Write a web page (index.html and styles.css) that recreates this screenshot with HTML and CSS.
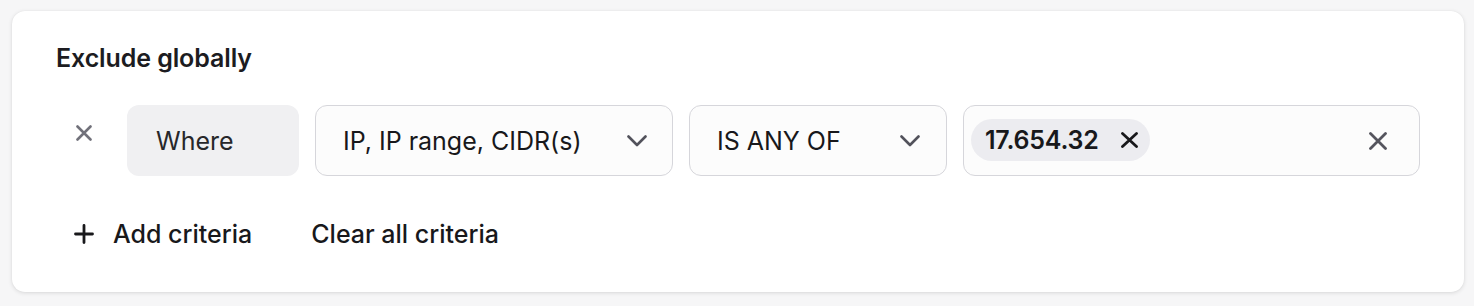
FILE: index.html
```html
<!DOCTYPE html>
<html>
<head>
<meta charset="utf-8">
<link rel="stylesheet" href="styles.css">
</head>
<body>
<div class="card">
  <h2 class="title">Exclude globally</h2>
  <div class="row">
    <button class="remove" aria-label="Remove">
      <svg width="16" height="16" viewBox="0 0 16 16"><path d="M1.5 1.5 L14.5 14.5 M14.5 1.5 L1.5 14.5" stroke="#71717a" stroke-width="2.6" stroke-linecap="round" fill="none"/></svg>
    </button>
    <div class="where">Where</div>
    <div class="select field">
      <span>IP, IP range, CIDR(s)</span>
      <svg class="chev" width="20" height="12" viewBox="0 0 20 12"><path d="M1.5 1.5 L10 10 L18.5 1.5" stroke="#52525b" stroke-width="2.6" stroke-linecap="round" stroke-linejoin="round" fill="none"/></svg>
    </div>
    <div class="select op">
      <span>IS ANY OF</span>
      <svg class="chev" width="20" height="12" viewBox="0 0 20 12"><path d="M1.5 1.5 L10 10 L18.5 1.5" stroke="#52525b" stroke-width="2.6" stroke-linecap="round" stroke-linejoin="round" fill="none"/></svg>
    </div>
    <div class="select values">
      <span class="chip">17.654.32
        <svg width="17" height="16" viewBox="0 0 17 16"><path d="M1.5 1.5 L15.5 14.5 M15.5 1.5 L1.5 14.5" stroke="#18181b" stroke-width="2.8" stroke-linecap="round" fill="none"/></svg>
      </span>
      <svg class="clear" width="18" height="18" viewBox="0 0 18 18"><path d="M1.5 1.5 L16.5 16.5 M16.5 1.5 L1.5 16.5" stroke="#55555e" stroke-width="2.8" stroke-linecap="round" fill="none"/></svg>
    </div>
  </div>
  <div class="actions">
    <button class="action add">
      <svg width="20" height="20" viewBox="0 0 20 20"><path d="M10 1.5 V18.5 M1.5 10 H18.5" stroke="#18181b" stroke-width="2.8" stroke-linecap="round" fill="none"/></svg>
      <span>Add criteria</span>
    </button>
    <button class="action clearall">Clear all criteria</button>
  </div>
</div>
</body>
</html>
```
FILE: styles.css
```css
* { box-sizing: border-box; }
html, body { margin: 0; padding: 0; }
body {
  background: #f6f6f7;
  font-family: Inter, "Noto Sans", sans-serif;
  color: #18181b;
  width: 1474px;
  height: 306px;
  padding: 11px 10px 0 12px;
}
.card {
  width: 1452px;
  height: 281px;
  background: #ffffff;
  border-radius: 13px;
  box-shadow: 0 1px 4px rgba(0,0,0,0.12), 0 0 1px rgba(0,0,0,0.08);
  padding: 30px 44px 0 44px;
}
.title {
  margin: 0;
  font-size: 25px;
  font-weight: 600;
  line-height: 34px;
  letter-spacing: -0.1px;
  color: #1c1c21;
}
.row {
  display: flex;
  gap: 16px;
  margin-top: 30px;
  height: 71px;
}
.remove {
  width: 55px;
  border: 0;
  background: none;
  padding: 20px 0 0 20px;
  display: flex;
  align-items: flex-start;
  cursor: pointer;
}
.where {
  width: 172px;
  background: #f0f0f2;
  border-radius: 12px;
  display: flex;
  align-items: center;
  padding-left: 29px;
  font-size: 25px;
  color: #27272a;
}
.select {
  background: #fcfcfc;
  border: 1.5px solid #d6d6db;
  border-radius: 12px;
  display: flex;
  align-items: center;
  font-size: 25px;
  color: #18181b;
}
.field { width: 358px; padding: 0 25px 0 27px; justify-content: space-between; }
.op { width: 258px; padding: 0 26px 0 27px; justify-content: space-between; }
.values { width: 457px; padding: 0 32px 0 7px; justify-content: space-between; }
.chip {
  display: inline-flex;
  align-items: center;
  gap: 22px;
  height: 42px;
  padding: 0 12px 0 14px;
  background: #ececf0;
  border-radius: 21px;
  font-size: 25px;
  font-weight: 600;
  letter-spacing: -0.2px;
  margin-top: -1px;
}
.actions {
  display: flex;
  align-items: center;
  margin-top: 43px;
  height: 30px;
}
.action {
  border: 0;
  background: none;
  font-family: inherit;
  font-size: 25px;
  font-weight: 500;
  color: #18181b;
  padding: 0;
  display: inline-flex;
  align-items: center;
  cursor: pointer;
}
.add { margin-left: 18px; gap: 19px; }
.clearall { margin-left: 59px; }
```
